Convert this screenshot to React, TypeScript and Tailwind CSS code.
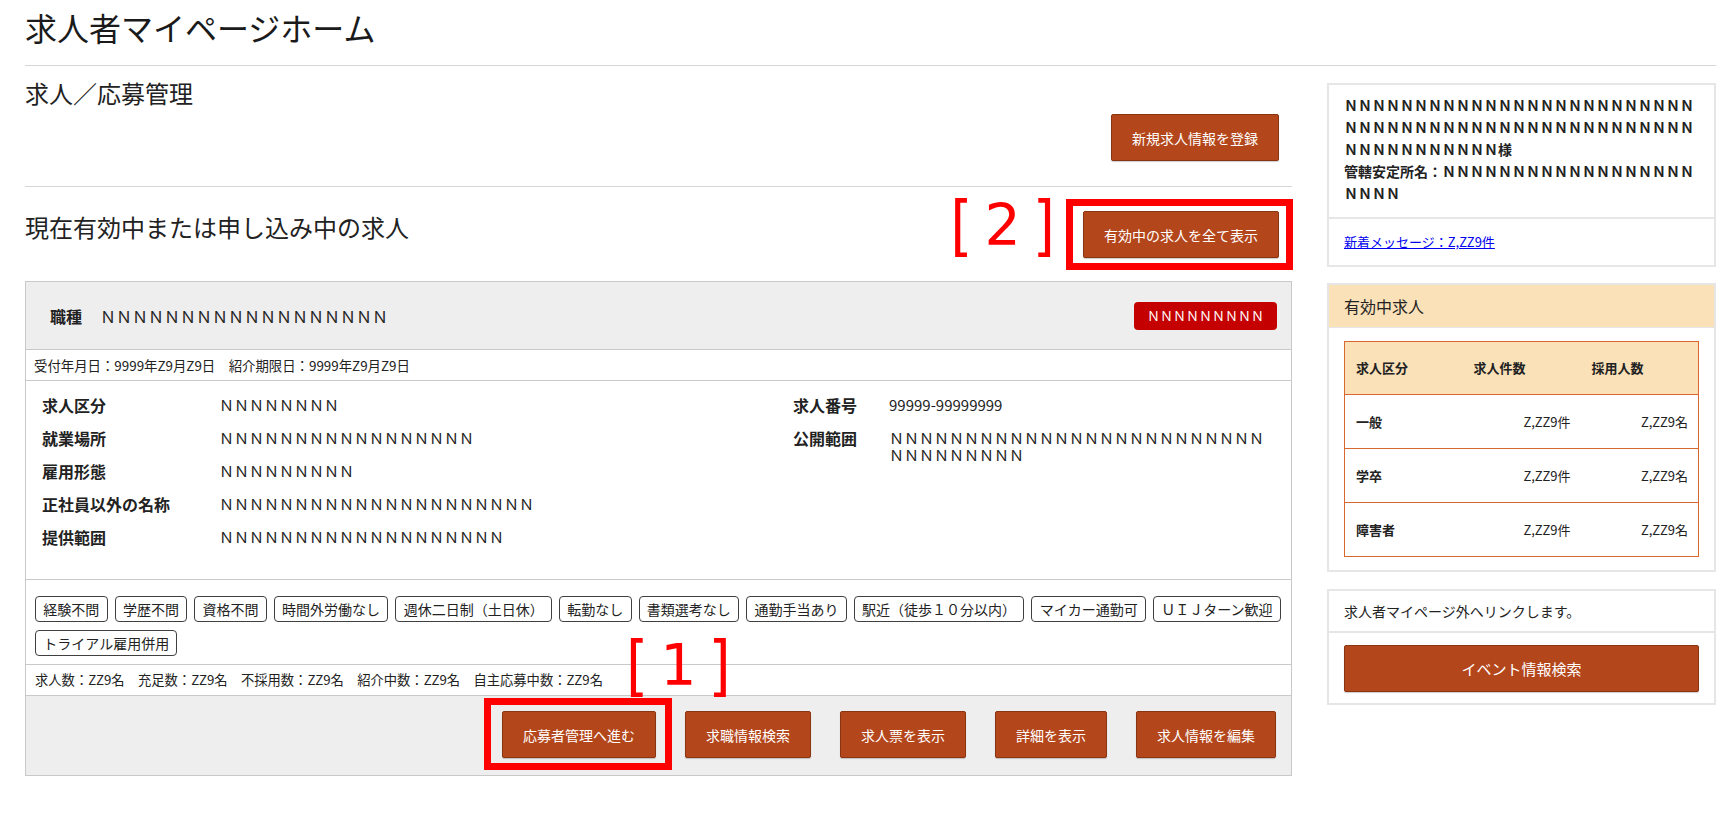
import React from "react";

const N = (n: number) => "Ｎ".repeat(n);

const tags = [
	"経験不問",
	"学歴不問",
	"資格不問",
	"時間外労働なし",
	"週休二日制（土日休）",
	"転勤なし",
	"書類選考なし",
	"通勤手当あり",
	"駅近（徒歩１０分以内）",
	"マイカー通勤可",
	"ＵＩＪターン歓迎",
	"トライアル雇用併用",
];

const leftDetails = [
	{ label: "求人区分", value: N(8) },
	{ label: "就業場所", value: N(17) },
	{ label: "雇用形態", value: N(9) },
	{ label: "正社員以外の名称", value: N(21) },
	{ label: "提供範囲", value: N(19) },
];

const rightDetails = [
	{ label: "求人番号", value: "99999-99999999" },
	{ label: "公開範囲", value: N(34) },
];

const stats = [
	{ kind: "一般", count: "Z,ZZ9件", hired: "Z,ZZ9名" },
	{ kind: "学卒", count: "Z,ZZ9件", hired: "Z,ZZ9名" },
	{ kind: "障害者", count: "Z,ZZ9件", hired: "Z,ZZ9名" },
];

const footerButtons = ["求職情報検索", "求人票を表示", "詳細を表示", "求人情報を編集"];

function Button({ children, className = "" }: { children: React.ReactNode; className?: string }) {
	return (
		<button
			type="button"
			className={`h-[47px] px-[20px] bg-[#b4461b] border border-[#8a3512] rounded-[2px] text-white text-[14px] leading-none shadow-[0_1px_1px_rgba(0,0,0,0.2)] whitespace-nowrap ${className}`}>
			{children}
		</button>
	);
}

// red "[ n ]" annotation drawn over the screenshot
function Marker({ label }: { label: string }) {
	return (
		<span className="flex items-center font-['DejaVu_Sans',sans-serif] text-[57px] leading-none text-[#ff0000]">
			<span className="inline-block scale-y-[1.14]">[</span>
			<span className="ml-[12px]">{label}</span>
			<span className="ml-[12px] inline-block scale-y-[1.14]">]</span>
		</span>
	);
}

export default function App() {
	return (
		<div className="min-h-screen bg-white text-[#222] font-['Noto_Sans_CJK_JP','Noto_Sans',sans-serif]">
			<div className="pl-[25px] pr-[20px]">
				<div className="h-[66px] border-b border-[#d6d6d6]">
					<h1 className="text-[32px] leading-[54px] text-[#1a1a1a]">求人者マイページホーム</h1>
				</div>

				<div className="flex gap-[35px]">
					{/* left column */}
					<div className="w-[1267px]">
						<div className="pt-[11px] pb-[25px] pr-[13px] border-b border-[#d6d6d6]">
							<h2 className="text-[24px] leading-[32px]">求人／応募管理</h2>
							<div className="mt-[5px] flex justify-end">
								<Button>新規求人情報を登録</Button>
							</div>
						</div>

						<div className="pt-[24px] pr-[13px] flex items-start justify-between">
							<h2 className="text-[24px] leading-[32px]">現在有効中または申し込み中の求人</h2>
							<div className="relative">
								<div className="absolute right-[calc(100%+28px)] top-[-14px]">
									<Marker label="2" />
								</div>
								<div className="absolute -left-[17px] -top-[12px] -right-[14px] -bottom-[12px] border-[7px] border-[#ff0000]" />
								<Button>有効中の求人を全て表示</Button>
							</div>
						</div>

						{/* job card */}
						<div className="mt-[23px] border border-[#c9c9c9]">
							<div className="h-[68px] bg-[#eeeeee] border-b border-[#c9c9c9] pl-[24px] pr-[14px] flex items-center justify-between">
								<div className="flex items-center">
									<span className="text-[16px] font-bold">職種</span>
									<span className="ml-[18px] text-[16px]">{N(18)}</span>
								</div>
								<span className="h-[28px] px-[13px] flex items-center rounded-[4px] bg-[#c40000] text-white text-[13px]">
									{N(9)}
								</span>
							</div>

							<div className="h-[31px] border-b border-[#c9c9c9] pl-[8px] flex items-center text-[13.4px]">
								受付年月日：9999年Z9月Z9日　紹介期限日：9999年Z9月Z9日
							</div>

							<div className="pl-[16px] pr-[14px] pt-[15px] pb-[33px] flex items-start">
								<div className="w-[751px] grid grid-cols-[177px_1fr] gap-y-[15px]">
									{leftDetails.map((d) => (
										<React.Fragment key={d.label}>
											<div className="text-[16px] leading-[18px] font-bold">{d.label}</div>
											<div className="text-[15px] leading-[18px]">{d.value}</div>
										</React.Fragment>
									))}
								</div>
								<div className="flex-1 grid grid-cols-[96px_1fr] gap-y-[15px]">
									{rightDetails.map((d) => (
										<React.Fragment key={d.label}>
											<div className="text-[16px] leading-[18px] font-bold">{d.label}</div>
											<div className="text-[15px] leading-[17px] break-all">{d.value}</div>
										</React.Fragment>
									))}
								</div>
							</div>

							<div className="border-t border-[#c9c9c9] px-[9px] pt-[16px] pb-[8px] flex flex-wrap gap-x-[7px] gap-y-[8px]">
								{tags.map((t) => (
									<span
										key={t}
										className="h-[26px] px-[7.3px] flex items-center border border-[#404040] rounded-[4px] text-[14px] whitespace-nowrap">
										{t}
									</span>
								))}
							</div>

							<div className="h-[31px] border-t border-[#c9c9c9] pl-[9px] flex items-center text-[13.3px]">
								求人数：ZZ9名　充足数：ZZ9名　不採用数：ZZ9名　紹介中数：ZZ9名　自主応募中数：ZZ9名
							</div>

							<div className="bg-[#eeeeee] border-t border-[#c9c9c9] pt-[15px] pb-[17px] pr-[15px] flex justify-end gap-[29px]">
								<div className="relative">
									<div className="absolute left-[124px] top-[-74px]">
										<Marker label="1" />
									</div>
									<div className="absolute -left-[18px] -top-[13px] -right-[16px] -bottom-[12px] border-[7px] border-[#ff0000]" />
									<Button className="h-[46px]">応募者管理へ進む</Button>
								</div>
								{footerButtons.map((b) => (
									<Button key={b} className="h-[46px]">
										{b}
									</Button>
								))}
							</div>
						</div>
					</div>

					{/* right column */}
					<div className="w-[389px] pt-[17px]">
						<div className="border-2 border-[#e6e6e6]">
							<div className="px-[15px] pt-[9px] pb-[13px] text-[14px] leading-[22px] font-bold break-all border-b-2 border-[#e6e6e6]">
								<p>{N(61)}様</p>
								<p>管轄安定所名：{N(22)}</p>
							</div>
							<div className="h-[46px] px-[15px] flex items-center">
								<a href="#" className="text-[13px] text-[#0000ee] underline">
									新着メッセージ：Z,ZZ9件
								</a>
							</div>
						</div>

						<div className="mt-[16px] border-2 border-[#e6e6e6]">
							<div className="h-[43px] bg-[#fae1b8] border-b border-[#e6e6e6] px-[15px] flex items-center text-[16px]">
								有効中求人
							</div>
							<div className="px-[15px] pt-[13px] pb-[13px]">
								<table className="w-full table-fixed border-collapse border border-[#d9682f] text-[13px]">
									<thead>
										<tr className="h-[53px] bg-[#fae1b8] border-b border-[#d9682f]">
											<th className="text-left font-bold pl-[11px]">求人区分</th>
											<th className="text-left font-bold pl-[11px]">求人件数</th>
											<th className="text-left font-bold pl-[11px]">採用人数</th>
										</tr>
									</thead>
									<tbody>
										{stats.map((s) => (
											<tr key={s.kind} className="h-[54px] border-b border-[#d9682f]">
												<td className="pl-[11px] font-bold">{s.kind}</td>
												<td className="text-right pr-[10px]">{s.count}</td>
												<td className="text-right pr-[10px]">{s.hired}</td>
											</tr>
										))}
									</tbody>
								</table>
							</div>
						</div>

						<div className="mt-[17px] border-2 border-[#e6e6e6]">
							<div className="h-[42px] px-[15px] flex items-center text-[14px] border-b-2 border-[#e6e6e6]">
								求人者マイページ外へリンクします。
							</div>
							<div className="px-[15px] pt-[12px] pb-[11px]">
								<Button className="w-full text-[15px]">イベント情報検索</Button>
							</div>
						</div>
					</div>
				</div>
			</div>
		</div>
	);
}
